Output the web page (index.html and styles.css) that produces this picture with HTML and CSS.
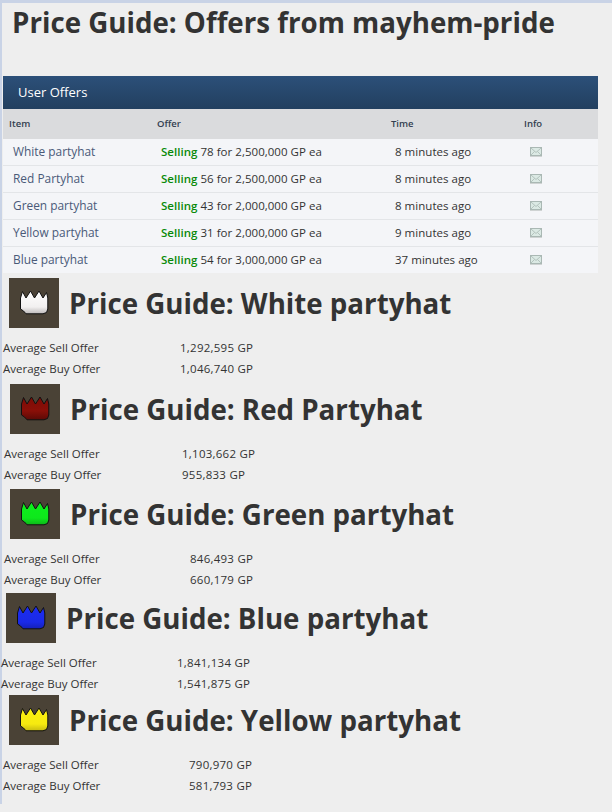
FILE: index.html
```html
<!DOCTYPE html>
<html lang="en">
<head>
<meta charset="utf-8">
<title>Price Guide</title>
<link rel="stylesheet" href="styles.css">
</head>
<body>
<svg class="defs" width="0" height="0" aria-hidden="true">
  <defs>
    <symbol id="crown" viewBox="0 0 50 50">
      <path d="M11.500 20 L13.500 13.500 L17 20 L21.500 13 L25.500 20 L30 13 L34 20 L37.500 14.500 L38.800 20 L38.800 31 L37.500 34.500 L34 35.800 L17 35.800 L14.500 33 L11.500 31 Z" stroke="#111" stroke-width="1" stroke-linejoin="miter"/>
    </symbol>
    <linearGradient id="gw" x1="0" y1="0" x2="0" y2="1"><stop offset="0" stop-color="#fff"/><stop offset=".7" stop-color="#f2f0f0"/><stop offset="1" stop-color="#bdb9b9"/></linearGradient>
    <linearGradient id="gr" x1="0" y1="0" x2="0" y2="1"><stop offset="0" stop-color="#7c0c06"/><stop offset=".6" stop-color="#8a0f08"/><stop offset="1" stop-color="#5c0a06"/></linearGradient>
    <linearGradient id="gg" x1="0" y1="0" x2="0" y2="1"><stop offset="0" stop-color="#0cf01c"/><stop offset=".7" stop-color="#0ee81c"/><stop offset="1" stop-color="#0cb818"/></linearGradient>
    <linearGradient id="gb" x1="0" y1="0" x2="0" y2="1"><stop offset="0" stop-color="#1c2cf0"/><stop offset=".7" stop-color="#1a2ae8"/><stop offset="1" stop-color="#1520b8"/></linearGradient>
    <linearGradient id="gy" x1="0" y1="0" x2="0" y2="1"><stop offset="0" stop-color="#faf010"/><stop offset=".7" stop-color="#f6ea10"/><stop offset="1" stop-color="#c8bc10"/></linearGradient>
    <symbol id="mail" viewBox="0 0 14 12">
      <rect x="1.500" y="1.500" width="11" height="8" fill="#dbe9e4" stroke="#aab8b4"/>
      <path d="M2 2 L7 6.500 L12 2 M2 9 L5.500 5.500 M12 9 L8.500 5.500" fill="none" stroke="#a9b9b4" stroke-width=".8"/>
      <rect x="1" y="10" width="12" height="1" fill="#cfd3d3"/>
    </symbol>
  </defs>
</svg>
<main class="page">
  <h1 class="title">Price Guide: Offers from mayhem-pride</h1>
  <section class="panel">
    <h2 class="panel-head">User Offers</h2>
    <div class="grid thead"><span>Item</span><span>Offer</span><span>Time</span><span>Info</span></div>
    <div class="grid row"><a>White partyhat</a><span><b>Selling</b> 78 for 2,500,000 GP ea</span><span>8 minutes ago</span><svg class="mail"><use href="#mail"/></svg></div>
    <div class="grid row"><a>Red Partyhat</a><span><b>Selling</b> 56 for 2,500,000 GP ea</span><span>8 minutes ago</span><svg class="mail"><use href="#mail"/></svg></div>
    <div class="grid row"><a>Green partyhat</a><span><b>Selling</b> 43 for 2,000,000 GP ea</span><span>8 minutes ago</span><svg class="mail"><use href="#mail"/></svg></div>
    <div class="grid row"><a>Yellow partyhat</a><span><b>Selling</b> 31 for 2,000,000 GP ea</span><span>9 minutes ago</span><svg class="mail"><use href="#mail"/></svg></div>
    <div class="grid row"><a>Blue partyhat</a><span><b>Selling</b> 54 for 3,000,000 GP ea</span><span>37 minutes ago</span><svg class="mail"><use href="#mail"/></svg></div>
  </section>

  <section class="guide g-white">
    <div class="guide-head"><div class="thumb"><svg class="crown c-white"><use href="#crown"/></svg></div><h2>Price Guide: White partyhat</h2></div>
    <dl class="stats"><dt>Average Sell Offer</dt><dd>1,292,595 GP</dd><dt>Average Buy Offer</dt><dd>1,046,740 GP</dd></dl>
  </section>
  <section class="guide g-red">
    <div class="guide-head"><div class="thumb"><svg class="crown c-red"><use href="#crown"/></svg></div><h2>Price Guide: Red Partyhat</h2></div>
    <dl class="stats"><dt>Average Sell Offer</dt><dd>1,103,662 GP</dd><dt>Average Buy Offer</dt><dd>955,833 GP</dd></dl>
  </section>
  <section class="guide g-green">
    <div class="guide-head"><div class="thumb"><svg class="crown c-green"><use href="#crown"/></svg></div><h2>Price Guide: Green partyhat</h2></div>
    <dl class="stats"><dt>Average Sell Offer</dt><dd>846,493 GP</dd><dt>Average Buy Offer</dt><dd>660,179 GP</dd></dl>
  </section>
  <section class="guide g-blue">
    <div class="guide-head"><div class="thumb"><svg class="crown c-blue"><use href="#crown"/></svg></div><h2>Price Guide: Blue partyhat</h2></div>
    <dl class="stats"><dt>Average Sell Offer</dt><dd>1,841,134 GP</dd><dt>Average Buy Offer</dt><dd>1,541,875 GP</dd></dl>
  </section>
  <section class="guide g-yellow">
    <div class="guide-head"><div class="thumb"><svg class="crown c-yellow"><use href="#crown"/></svg></div><h2>Price Guide: Yellow partyhat</h2></div>
    <dl class="stats"><dt>Average Sell Offer</dt><dd>790,970 GP</dd><dt>Average Buy Offer</dt><dd>581,793 GP</dd></dl>
  </section>
</main>
</body>
</html>
```
FILE: styles.css
```css
* { box-sizing: border-box; }
html, body { margin: 0; height: 812px; overflow: hidden; }
body {
  background: linear-gradient(#c9d3e6, #c9d3e6) top / 100% 3px no-repeat, #eeeeee;
  font-family: "Open Sans", sans-serif;
  font-size: 11.5px;
  color: #333;
}
.defs { position: absolute; }
.page {
  margin-top: 3px;
  padding-left: 2px;
  height: 801px;
  background: linear-gradient(#c9d3e6, #c9d3e6) left top / 2px 100% no-repeat, #eeeeee;
}
.title {
  margin: 0;
  padding: 0 0 0 10px;
  height: 73px;
  font-size: 27.700px;
  line-height: 38px;
  font-weight: 700;
  color: #333;
}
.panel { width: 595px; margin-left: 1px; }
.panel-head {
  margin: 0;
  height: 33px;
  padding-left: 15px;
  font-size: 13px;
  line-height: 33px;
  font-weight: 400;
  color: #fff;
  background: linear-gradient(#2c5079, #223f5f);
}
.grid {
  display: grid;
  grid-template-columns: 148px 234px 133px 1fr;
  align-items: center;
}
.thead {
  height: 30px;
  padding: 0 0 2px 6px;
  background: #dadbdd;
  font-size: 9.500px;
  font-weight: 600;
  color: #333f50;
}
.row {
  height: 27px;
  padding: 0 0 2px 10px;
  background: #f4f5f8;
  border-bottom: 1px solid #e3e5e8;
}
.row:last-child { border-bottom: 0; height: 26px; }
.row a { color: #4a5a78; font-size: 11.900px; }
.row b { color: #0a8a0a; font-weight: 600; }
.row span { color: #333; letter-spacing: .03px; }
.mail { width: 14px; height: 12px; margin: 2px 0 0 1px; }

.guide-head { display: flex; align-items: center; }
.thumb {
  width: 50px;
  height: 50px;
  background: #4a4236;
  flex: none;
}
.crown { display: block; width: 50px; height: 50px; }
.c-white { fill: url(#gw); }
.c-red { fill: url(#gr); }
.c-green { fill: url(#gg); }
.c-blue { fill: url(#gb); }
.c-yellow { fill: url(#gy); }
.guide h2 {
  margin: 0 0 0 10px;
  font-size: 27.700px;
  line-height: 38px;
  font-weight: 700;
  color: #333;
}
.stats {
  display: grid;
  grid-template-columns: var(--val) 1fr;
  grid-auto-rows: 21px;
  margin: 9px 0 0;
  align-items: center;
  line-height: 21px;
  color: #333;
}
.stats dt, .stats dd { margin: 0; }
.stats dd { letter-spacing: .25px; }

.g-white { padding-top: 5px; height: 111px; }
.g-white .guide-head { padding-left: 7px; }
.g-white .stats { margin-left: 1px; --val: 177px; }
.g-red { height: 105px; }
.g-red .guide-head { padding-left: 8px; }
.g-red .stats { margin-left: 2px; --val: 178px; }
.g-green { height: 104px; }
.g-green .guide-head { padding-left: 8px; }
.g-green .stats { margin-left: 2px; --val: 186px; }
.g-blue { height: 102px; }
.g-blue .guide-head { padding-left: 4px; }
.g-blue .stats { margin-left: -1px; --val: 176px; }
.g-yellow .guide-head { padding-left: 7px; }
.g-yellow .stats { margin-left: 1px; --val: 186px; }
```
